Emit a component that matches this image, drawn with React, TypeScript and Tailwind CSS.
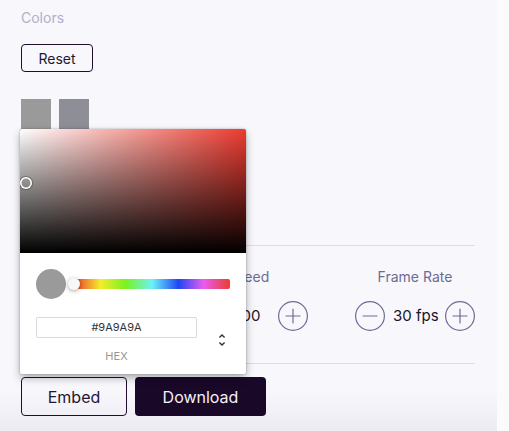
import React from 'react';

const font = { fontFamily: 'Inter, "Open Sans", sans-serif' };

function RoundButton({ kind }: { kind: 'minus' | 'plus' }) {
  return (
    <button className="flex h-[30px] w-[30px] shrink-0 items-center justify-center">
      <svg width="30" height="30" viewBox="0 0 30 30" fill="none" stroke="#6e6c93" strokeWidth="1.2">
        <circle cx="15" cy="15" r="14.4" />
        <line x1="8" y1="15" x2="22" y2="15" strokeLinecap="round" />
        {kind === 'plus' && <line x1="15" y1="8" x2="15" y2="22" strokeLinecap="round" />}
      </svg>
    </button>
  );
}

function Stepper({ label, value }: { label: string; value: string }) {
  return (
    <div className="flex flex-col items-center">
      <p className="whitespace-nowrap text-[14px] leading-5 text-[#6e6c93]">{label}</p>
      <div className="mt-[14px] flex items-center gap-2">
        <RoundButton kind="minus" />
        <span className="w-[44px] shrink-0 whitespace-nowrap text-center text-[15px] leading-5 text-[#1c1428]">{value}</span>
        <RoundButton kind="plus" />
      </div>
    </div>
  );
}

function ColorPicker() {
  return (
    <div className="absolute left-[20px] top-[129px] w-[226px] rounded-[2px] bg-white shadow-[0_0_2px_rgba(0,0,0,0.3),0_4px_8px_rgba(0,0,0,0.3)]">
      <div className="relative h-[124px] overflow-hidden rounded-t-[2px] bg-[#ec3b2f]">
        <div className="absolute inset-0 bg-[linear-gradient(to_right,#fff,rgba(255,255,255,0))]" />
        <div className="absolute inset-0 bg-[linear-gradient(to_top,#000,rgba(0,0,0,0))]" />
        <div className="absolute left-0 top-[48px] h-[12px] w-[12px] rounded-full shadow-[inset_0_0_0_1.5px_#fff,0_0_1px_1px_rgba(0,0,0,0.3)]" />
      </div>
      <div className="px-4 pb-3 pt-4">
        <div className="flex items-center">
          <div className="h-[30px] w-[30px] rounded-full bg-[#9a9a9a]" />
          <div className="relative ml-[8px] h-[10px] flex-1 rounded-[2px] bg-[linear-gradient(to_right,#ec3b2f_0%,#f5ec2a_17%,#7af21f_33%,#6cf2f5_50%,#1f46f5_67%,#e95cf0_83%,#ec3b2f_100%)]">
            <div className="absolute left-[-6px] top-[-1px] h-[12px] w-[12px] rounded-full bg-[#f8f8f8] shadow-[0_1px_4px_rgba(0,0,0,0.37)]" />
          </div>
        </div>
        <div className="mt-[18px] flex">
          <div className="flex w-[161px] flex-col items-center">
            <div className="flex h-[21px] w-full items-center justify-center rounded-[2px] text-[11px] text-[#333] shadow-[inset_0_0_0_1px_#dadada]">
              #9A9A9A
            </div>
            <p className="mt-[12px] text-[11px] leading-[12px] text-[#969696]">HEX</p>
          </div>
          <div className="flex flex-1 items-start justify-end pt-[15px]">
            <svg width="16" height="16" viewBox="0 0 24 24">
              <path
                fill="#333"
                d="M12,18.17L8.83,15L7.42,16.41L12,21L16.59,16.41L15.17,15M12,5.83L15.17,9L16.58,7.59L12,3L7.41,7.59L8.83,9L12,5.83Z"
              />
            </svg>
          </div>
        </div>
      </div>
    </div>
  );
}

export default function App() {
  return (
    <div className="flex h-[431px] w-[509px] overflow-hidden bg-[#fbfbfc]" style={font}>
      <div className="relative h-full w-[497px] shrink-0 bg-[linear-gradient(to_bottom,#f7f7fc_390px,#ebebf1_431px)] pl-[21px] pr-[22px] pt-[8px]">
        <p className="text-[14px] leading-5 text-[#b0b0c9]">Colors</p>
        <button className="mt-[16px] flex h-[28px] w-[72px] items-center justify-center rounded-[4px] border border-[#1e0f2e] text-[14px] text-[#241733]">
          Reset
        </button>
        <div className="mt-[27px] flex gap-2">
          <div className="h-[30px] w-[30px] bg-[#9a9a9a]" />
          <div className="h-[30px] w-[30px] bg-[#8e8e97]" />
        </div>

        <div className="mt-[116px] h-px bg-[#dcdbe8]" />
        <div className="mt-[21px] flex justify-end gap-[47px]">
          <Stepper label="Speed" value="100" />
          <Stepper label="Frame Rate" value="30 fps" />
        </div>
        <div className="mt-[32px] h-px bg-[#dcdbe8]" />

        <div className="mt-[13px] flex gap-2">
          <button className="flex h-[39px] w-[106px] items-center justify-center rounded-[4px] border border-[#1e0f2e] text-[16px] text-[#241733]">
            Embed
          </button>
          <button className="flex h-[39px] w-[131px] items-center justify-center rounded-[4px] bg-[#1a0828] text-[16px] text-[#f4f1f7]">
            Download
          </button>
        </div>

        <ColorPicker />
      </div>
    </div>
  );
}
